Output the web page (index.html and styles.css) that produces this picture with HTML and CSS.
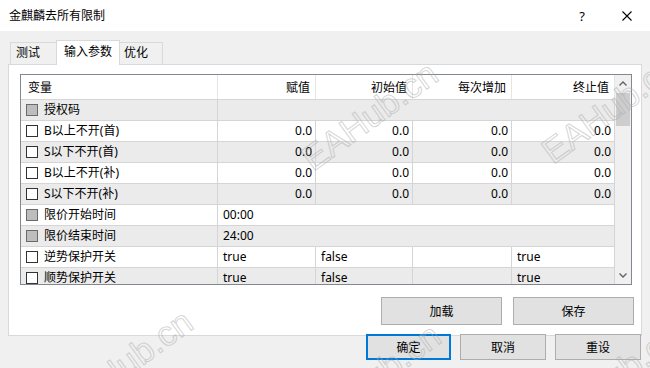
FILE: index.html
```html
<!DOCTYPE html>
<html lang="zh-CN">
<head>
    <meta charset="UTF-8">
    <title>金麒麟去所有限制</title>
    <link rel="stylesheet" href="styles.css">
</head>
<body>
    <div class="titlebar">
        <span class="title">金麒麟去所有限制</span>
        <span class="help">?</span>
        <svg class="close" width="10" height="10" viewBox="0 0 10 10">
            <path d="M0.5 0.5 L9.5 9.5 M9.5 0.5 L0.5 9.5" stroke="#000" stroke-width="1.1" fill="none"/>
        </svg>
    </div>

    <div class="tabs">
        <div class="tab first">测试</div>
        <div class="tab active">输入参数</div>
        <div class="tab last">优化</div>
    </div>

    <div class="panel">
        <div class="grid-box">
            <div class="grid">
                <div class="row head">
                    <div class="cell">变量</div>
                    <div class="cell num">赋值</div>
                    <div class="cell num">初始值</div>
                    <div class="cell num">每次增加</div>
                    <div class="cell num">终止值</div>
                </div>
                <div class="row alt">
                    <div class="cell name"><span class="check fixed"></span>授权码</div>
                    <div class="cell wide"></div>
                </div>
                <div class="row">
                    <div class="cell name"><span class="check"></span>B以上不开(首)</div>
                    <div class="cell num">0.0</div>
                    <div class="cell num">0.0</div>
                    <div class="cell num">0.0</div>
                    <div class="cell num">0.0</div>
                </div>
                <div class="row alt">
                    <div class="cell name"><span class="check"></span>S以下不开(首)</div>
                    <div class="cell num">0.0</div>
                    <div class="cell num">0.0</div>
                    <div class="cell num">0.0</div>
                    <div class="cell num">0.0</div>
                </div>
                <div class="row">
                    <div class="cell name"><span class="check"></span>B以上不开(补)</div>
                    <div class="cell num">0.0</div>
                    <div class="cell num">0.0</div>
                    <div class="cell num">0.0</div>
                    <div class="cell num">0.0</div>
                </div>
                <div class="row alt">
                    <div class="cell name"><span class="check"></span>S以下不开(补)</div>
                    <div class="cell num">0.0</div>
                    <div class="cell num">0.0</div>
                    <div class="cell num">0.0</div>
                    <div class="cell num">0.0</div>
                </div>
                <div class="row">
                    <div class="cell name"><span class="check fixed"></span>限价开始时间</div>
                    <div class="cell wide">00:00</div>
                </div>
                <div class="row alt">
                    <div class="cell name"><span class="check fixed"></span>限价结束时间</div>
                    <div class="cell wide">24:00</div>
                </div>
                <div class="row">
                    <div class="cell name"><span class="check"></span>逆势保护开关</div>
                    <div class="cell">true</div>
                    <div class="cell">false</div>
                    <div class="cell"></div>
                    <div class="cell">true</div>
                </div>
                <div class="row alt">
                    <div class="cell name"><span class="check"></span>顺势保护开关</div>
                    <div class="cell">true</div>
                    <div class="cell">false</div>
                    <div class="cell"></div>
                    <div class="cell">true</div>
                </div>
            </div>

            <div class="scrollbar">
                <div class="arrow">
                    <svg width="8" height="5" viewBox="0 0 8 5"><path d="M0.5 4.5 L4 1 L7.5 4.5" stroke="#606060" stroke-width="1.3" fill="none"/></svg>
                </div>
                <div class="thumb"></div>
                <div class="track"></div>
                <div class="arrow">
                    <svg width="8" height="5" viewBox="0 0 8 5"><path d="M0.5 0.5 L4 4 L7.5 0.5" stroke="#606060" stroke-width="1.3" fill="none"/></svg>
                </div>
            </div>
        </div>

        <div class="panel-actions">
            <button class="btn big">加载</button>
            <button class="btn big">保存</button>
        </div>
    </div>

    <div class="footer">
        <button class="btn small default">确定</button>
        <button class="btn small wider">取消</button>
        <button class="btn small wider">重设</button>
    </div>

    <!-- watermark overlay -->
    <div class="watermark">
        <span class="mark m1">EAHub.cn</span>
        <span class="mark m2">EAHub.cn</span>
        <span class="mark m3">EAHub.cn</span>
        <span class="mark m4">EAHub.cn</span>
        <span class="mark m5">EAHub.cn</span>
    </div>
</body>
</html>
```

FILE: styles.css
```css
body{
    margin: 0;
    width: 650px;
    height: 368px;
    position: relative;
    overflow: hidden;
    background: #f0f0f0;
    font-family: "Noto Sans", "Noto Sans CJK SC", sans-serif;
    font-size: 12px;
    color: #000;
}

.titlebar{
    height: 31px;
    background: #fff;
    display: flex;
    align-items: center;
    padding-left: 9px;
}

.title{
    flex: 1;
    line-height: 16px;
}

.help{
    width: 12px;
    text-align: center;
    font-size: 13px;
    line-height: 16px;
    margin-right: 34px;
}

.close{
    margin-right: 18px;
}

/* tabs */
.tabs{
    display: flex;
    align-items: flex-end;
    height: 33px;
    padding-left: 10px;
}

.tab{
    box-sizing: border-box;
    height: 22px;
    border: 1px solid #d9d9d9;
    border-bottom: none;
    line-height: 20px;
    white-space: nowrap;
}

.tab.first{
    width: 46px;
    padding-left: 5px;
    border-right: none;
}

.tab.active{
    position: relative;
    z-index: 1;
    width: 64px;
    height: 25px;
    margin-bottom: -1px;
    padding-left: 7px;
    line-height: 21px;
    background: #fff;
}

.tab.last{
    width: 43px;
    padding-left: 4px;
    border-left: none;
}

.panel{
    box-sizing: border-box;
    width: 634px;
    height: 272px;
    margin: 0 8px;
    padding: 9px 7px 0 11px;
    background: #fff;
    border: 1px solid #d9d9d9;
}

/* list of inputs */
.grid-box{
    box-sizing: border-box;
    width: 612px;
    height: 211px;
    border: 1px solid #828790;
    display: flex;
    overflow: hidden;
}

.grid{
    width: 594px;
    overflow: hidden;
}

.row{
    display: grid;
    grid-template-columns: 197px 98px 97px 99px 103px;
    box-sizing: border-box;
    height: 21px;
    border-bottom: 1px solid #d5d5d5;
    background: #fff;
}

.row.alt{
    background: #ebebeb;
}

.row.head{
    height: 25px;
}

.cell{
    border-right: 1px solid #d5d5d5;
    padding: 0 3px 0 5px;
    line-height: 20px;
    white-space: nowrap;
    overflow: hidden;
}

.head .cell{
    border-right-color: #e5e5e5;
    line-height: 24px;
    padding: 1px 5px 0 7px;
}

.cell.num{
    text-align: right;
}

.cell.name{
    display: flex;
    align-items: center;
}

.cell.wide{
    grid-column: span 4;
}

.check{
    box-sizing: border-box;
    width: 12px;
    height: 12px;
    border: 1px solid #333;
    background: #fff;
    margin-right: 6px;
    flex: none;
}

.check.fixed{
    border-color: #6a6a6a;
    background: #bdbdbd;
}

.scrollbar{
    width: 16px;
    background: #f0f0f0;
    display: flex;
    flex-direction: column;
}

.arrow{
    height: 17px;
    display: flex;
    align-items: center;
    justify-content: center;
}

.thumb{
    height: 33px;
    margin: 1px 1px 0;
    background: #cdcdcd;
}

.track{
    flex: 1;
}

/* buttons */
.btn{
    box-sizing: border-box;
    padding: 0;
    background: #e1e1e1;
    border: 1px solid #adadad;
    font-family: inherit;
    font-size: 12px;
    color: #000;
}

.btn.big{
    width: 121px;
    height: 28px;
}

.btn.small{
    width: 85px;
    height: 26px;
}

.btn.wider{
    width: 86px;
}

.btn.default{
    border: 2px solid #0078d7;
}

.panel-actions{
    display: flex;
    justify-content: flex-end;
    gap: 11px;
    margin-top: 12px;
}

.footer{
    display: flex;
    justify-content: flex-end;
    gap: 9px;
    margin-top: -2px;
    padding-right: 9px;
}

.watermark{
    position: absolute;
    left: 0;
    top: 0;
    width: 650px;
    height: 368px;
    overflow: hidden;
    pointer-events: none;
}

.mark{
    position: absolute;
    font-family: "Liberation Sans", sans-serif;
    font-size: 35px;
    line-height: 35px;
    color: transparent;
    -webkit-text-stroke: 1px rgba(170, 170, 170, 0.5);
    transform-origin: 0 30px;
    transform: rotate(-36deg);
    white-space: nowrap;
}

.m1{ left: 313px; top: 142px; }
.m2{ left: 553px; top: 135px; }
.m3{ left: 68px;  top: 390px; }
.m4{ left: 316px; top: 404px; }
.m5{ left: 556px; top: 404px; }
```
